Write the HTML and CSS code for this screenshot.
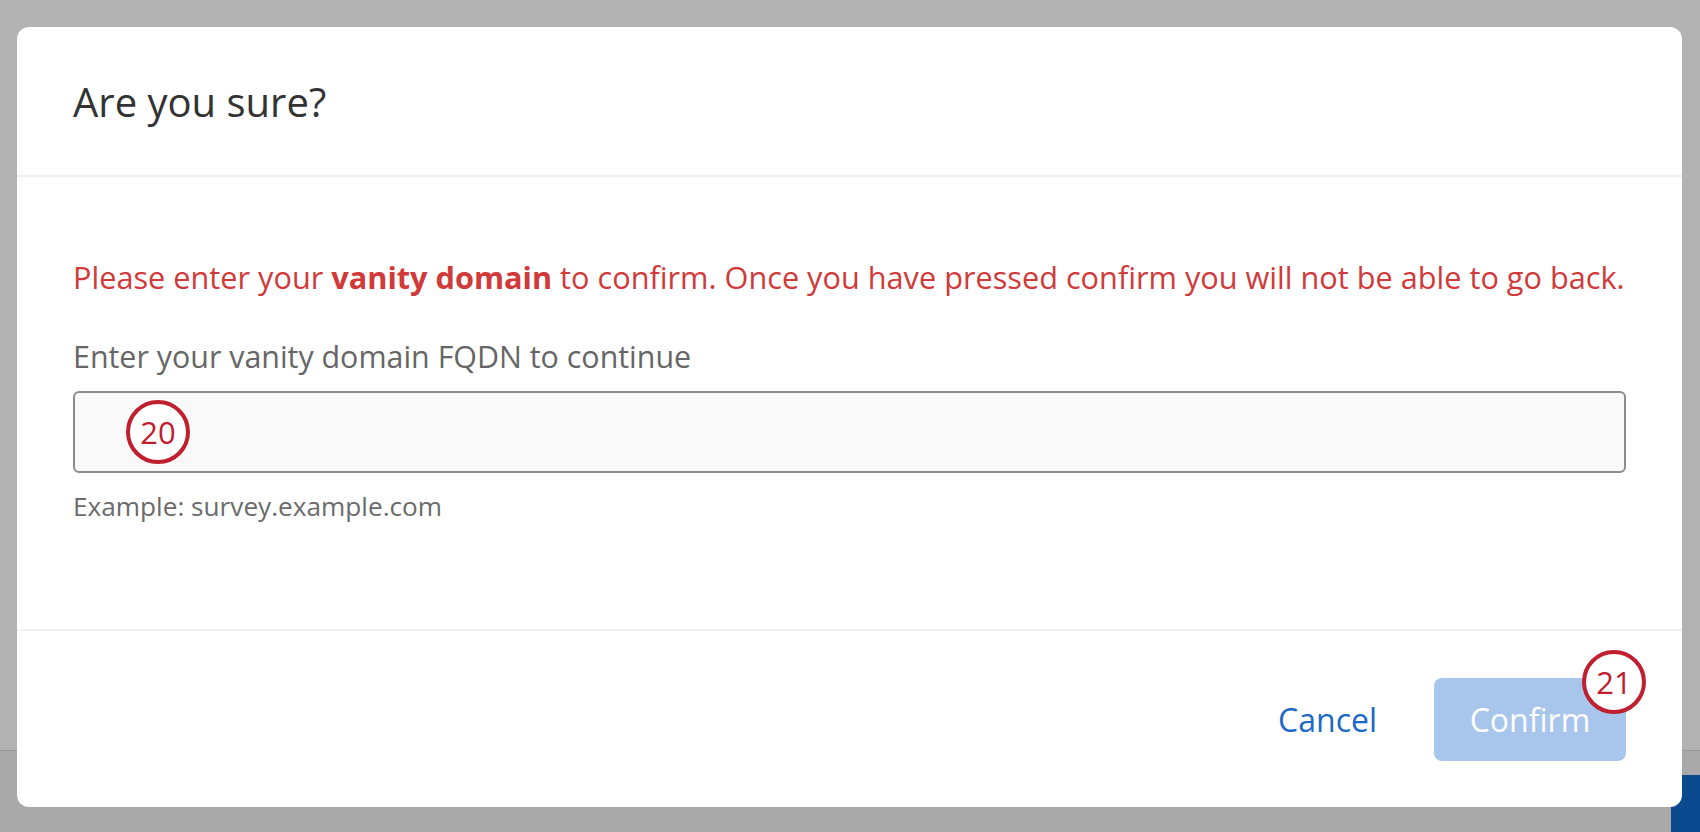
FILE: index.html
```html
<!DOCTYPE html>
<html lang="en">

<head>
    <meta charset="UTF-8">
    <meta name="viewport" content="width=device-width, initial-scale=1.0">
    <title>Are you sure?</title>
    <link rel="stylesheet" href="styles.css">
</head>

<body>
    <div class="page">
        <div class="page-main"></div>
        <div class="page-bottom">
            <div class="page-corner"></div>
        </div>
    </div>

    <div class="dialog">
        <div class="dialog-header">
            <h1>Are you sure?</h1>
        </div>

        <div class="dialog-body">
            <p class="warning">Please enter your <b>vanity domain</b> to confirm. Once you have pressed confirm you will not be able to go back.</p>
            <label class="field-label" for="fqdn">Enter your vanity domain FQDN to continue</label>
            <div class="field">
                <input id="fqdn" type="text">
                <span class="step step-20">20</span>
            </div>
            <div class="field-hint">Example: survey.example.com</div>
        </div>

        <div class="dialog-footer">
            <button class="btn-cancel">Cancel</button>
            <div class="confirm-wrap">
                <button class="btn-confirm" disabled>Confirm</button>
                <span class="step step-21">21</span>
            </div>
        </div>
    </div>
</body>

</html>
```

FILE: styles.css
```css
body {
    margin: 0;
    font-family: "Open Sans", "Liberation Sans", sans-serif;
    background-color: #b2b2b2;
    overflow: hidden;
}

.page {
    height: 832px;
    display: flex;
    flex-direction: column;
}

.page-main {
    height: 750px;
}

.page-bottom {
    flex: 1;
    display: flex;
    justify-content: flex-end;
    border-top: 1px solid #9a9a9a;
    background-color: #a9a9a9;
}

.page-corner {
    width: 29px;
    margin-top: 24px;
    background-color: #0b4a8f;
}

.dialog {
    position: absolute;
    left: 17px;
    top: 27px;
    width: 1665px;
    height: 780px;
    display: flex;
    flex-direction: column;
    background-color: #fff;
    border-radius: 12px;
}

.dialog-header {
    height: 148px;
    display: flex;
    align-items: center;
    padding: 0 56px;
    border-bottom: 2px solid #f0f0f0;
}

.dialog-header h1 {
    margin: 0;
    font-size: 40px;
    font-weight: 400;
    color: #333;
}

.dialog-body {
    flex: 1;
    padding: 78px 56px 0;
    border-bottom: 2px solid #f0f0f0;
}

.warning {
    margin: 0 0 38px;
    font-size: 30.7px;
    line-height: 44px;
    color: #d13a3a;
}

.warning b {
    font-weight: 700;
}

.field-label {
    display: block;
    font-size: 30.4px;
    line-height: 40px;
    color: #666;
}

.field {
    position: relative;
    margin-top: 14px;
}

.field input {
    display: block;
    box-sizing: border-box;
    width: 100%;
    height: 82px;
    margin: 0;
    border: 2px solid #8c8c8c;
    border-radius: 6px;
    background-color: #f9f9f9;
}

.field-hint {
    margin-top: 16px;
    font-size: 26.2px;
    line-height: 34px;
    color: #6b6b6b;
}

.step {
    position: absolute;
    box-sizing: border-box;
    width: 64px;
    height: 64px;
    display: flex;
    align-items: center;
    justify-content: center;
    border: 4px solid #c01f2f;
    border-radius: 50%;
    background-color: #fff;
    color: #c01f2f;
    font-size: 31px;
}

.step-20 {
    left: 53px;
    top: 9px;
}

.step-21 {
    right: -20px;
    top: -28px;
}

.dialog-footer {
    height: 176px;
    display: flex;
    align-items: center;
    justify-content: flex-end;
    gap: 47px;
    padding: 0 56px;
}

.btn-cancel {
    border: none;
    background: none;
    padding: 0 10px;
    font-family: inherit;
    font-size: 32px;
    color: #1c69c6;
}

.confirm-wrap {
    position: relative;
}

.btn-confirm {
    display: block;
    width: 192px;
    height: 83px;
    border: none;
    border-radius: 8px;
    background-color: #a8c6ec;
    font-family: inherit;
    font-size: 32px;
    color: #fff;
}
```
